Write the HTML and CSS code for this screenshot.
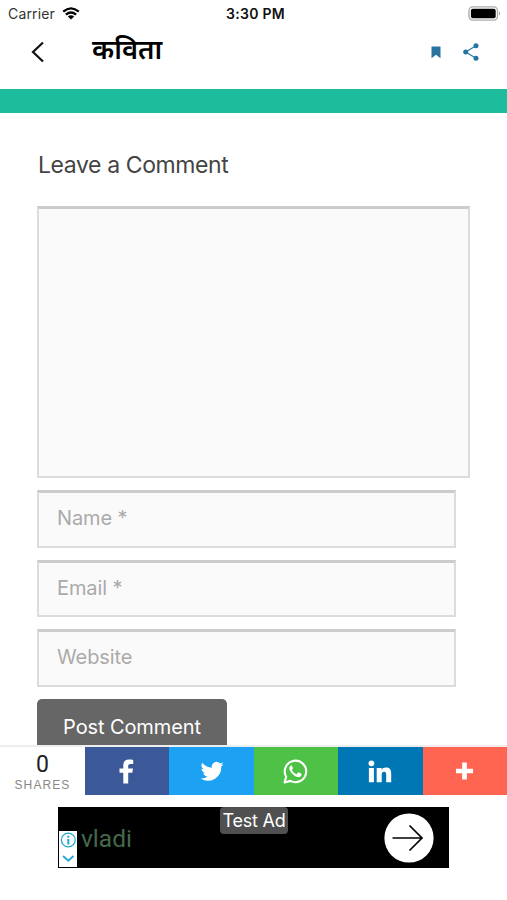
FILE: index.html
```html
<!DOCTYPE html>
<html lang="hi">

<head>
    <meta charset="utf-8">
    <title>कविता</title>
    <meta name="viewport" content="width=device-width, initial-scale=1">

    <link rel="stylesheet" href="styles.css">
</head>

<body>
    <div class="status-bar">
        <div class="carrier">
            <span>Carrier</span>
            <svg width="18" height="13" viewBox="0 0 18 13">
                <path d="M1.2 4.6Q9-1.8 16.8 4.6M3.9 7.6Q9 3.4 14.1 7.6" fill="none" stroke="#000" stroke-width="2.3" />
                <path d="M5.8 9.4Q9 6.9 12.2 9.4L9 12.6Z" />
            </svg>
        </div>
        <div class="clock">3:30 PM</div>
        <svg class="battery" width="33" height="15" viewBox="0 0 33 15">
            <rect x="1" y=".9" width="28.5" height="13.2" rx="3.8" fill="#fff" stroke="#aaa" stroke-width="1.3" />
            <rect x="2.9" y="2.8" width="24.8" height="9.4" rx="2" />
            <path d="M31 5.5Q33 7.5 31 9.5Z" fill="#999" />
        </svg>
    </div>

    <header class="header">
        <svg class="back" width="14" height="22" viewBox="0 0 14 22">
            <path d="M12 1.5 2 11l10 9.5" fill="none" stroke="#111" stroke-width="2.2" />
        </svg>
        <h1 class="title">कविता</h1>
        <svg class="bookmark" width="10" height="13" viewBox="0 0 10 13">
            <path d="M.5.5h9v11.8L5 8.7.5 12.3Z" fill="#2874a0" />
        </svg>
        <svg class="share-icon" width="16" height="18" viewBox="0 0 16 18">
            <path d="M13 2.7 2.7 9 13 15.3" fill="none" stroke="#2f7da6" stroke-width="1.3" />
            <g fill="#2474a0">
                <circle cx="13" cy="2.7" r="2.5" />
                <circle cx="2.7" cy="9" r="2.5" />
                <circle cx="13" cy="15.3" r="2.5" />
            </g>
        </svg>
    </header>

    <div class="band"></div>

    <main class="content">
        <h2 class="reply-title">Leave a Comment</h2>
        <form class="comment-form">
            <textarea class="field comment"></textarea>
            <input class="field" type="text" placeholder="Name *">
            <input class="field" type="email" placeholder="Email *">
            <input class="field" type="url" placeholder="Website">
            <button class="submit" type="button">Post Comment</button>
        </form>
    </main>

    <div class="share-bar">
        <div class="count">
            <span class="number">0</span>
            <span class="label">SHARES</span>
        </div>
        <a class="share facebook">
            <svg width="16" height="25" viewBox="0 0 16 25">
                <path d="M4.3 24.5V13.8H.5V9.4h3.800V6.200C4.300 2.500 6.500.6 9.900.6c1.600 0 3 .1 4.300.3v4h-2.600c-2 0-2.400.9-2.400 2.300v2.200H14l-.7 4.400H9.200v10.700Z" fill="#fff" />
            </svg>
        </a>
        <a class="share twitter">
            <svg width="24" height="24" viewBox="-1 0 25 24">
                <path d="M23.6 4.9c-.9.4-1.8.6-2.8.8 1-.6 1.8-1.6 2.1-2.7-.9.6-2 1-3.1 1.2a4.900 4.900 0 0 0-8.400 4.500C7.400 8.500 3.700 6.500 1.300 3.500A4.900 4.900 0 0 0 2.800 10c-.8 0-1.600-.2-2.200-.6 0 2.400 1.700 4.400 3.900 4.900-.7.2-1.500.2-2.200.1.600 2 2.400 3.400 4.600 3.400A9.900 9.900 0 0 1-.400 19.800a13.900 13.900 0 0 0 21.500-12.400c1-.7 1.800-1.500 2.500-2.500Z" fill="#fff" />
            </svg>
        </a>
        <a class="share whatsapp">
            <svg width="25" height="25" viewBox="0 0 24 24">
                <path d="M1.500 22.500 3 17A10.300 10.300 0 1 1 7.100 21Z" fill="none" stroke="#fff" stroke-width="2" stroke-linejoin="round" />
                <path d="M8.600 6.600c-.3-.6-1-.6-1.500-.1C6 7.600 5.700 9 6.400 10.500c1.600 3.300 4 5.600 7.300 6.700 1.700.5 3.300-.2 3.900-1.700.3-.9.200-1.200-.3-1.500l-2.200-1c-.4-.2-.7-.1-1 .3l-.8 1c-.3.300-.600.300-.9.100-1.700-.8-2.800-1.900-3.700-3.400-.2-.3-.1-.6.100-.9.400-.4.900-1 .8-1.500Z" fill="#fff" />
            </svg>
        </a>
        <a class="share linkedin">
            <svg width="24" height="23" viewBox="0 0 24 23">
                <path d="M.9 7.900h5V22.300H.9ZM8.700 7.900h4.900v1.900c.8-1.400 2.300-2.300 4.400-2.300 4.300 0 5.200 2.700 5.200 6.500v8.300h-5v-7.100c0-1.700-.1-3.400-2-3.400-2.100 0-2.500 1.600-2.500 3.300v7.200h-5Z" fill="#fff" />
                <circle cx="3.400" cy="3.300" r="2.900" fill="#fff" />
            </svg>
        </a>
        <a class="share more">
            <svg width="18" height="18" viewBox="0 0 18 18">
                <path d="M8.500.5v17M0 9h17" stroke="#fff" stroke-width="4.700" />
            </svg>
        </a>
    </div>

    <footer class="footer">
        <div class="ad">
            <div class="ad-choices">
                <svg width="18" height="36" viewBox="0 0 18 36" fill="none" stroke="#23a9d0">
                    <circle cx="9.300" cy="9" r="6.900" stroke-width="1.300" />
                    <path d="M9.300 4.700v2M9.300 8v5.400" stroke-width="2" />
                    <path d="m4.100 25 5.200 4.700 5.200-4.700" stroke-width="1.800" />
                </svg>
            </div>
            <span class="ad-name">vladi</span>
            <svg class="ad-arrow" width="50" height="50" viewBox="0 0 50 50">
                <circle cx="25" cy="25" r="24.600" fill="#fff" />
                <path d="M8.500 25h29M25.500 12.500 38 25 25.500 37.500" fill="none" stroke="#000" stroke-width="1.700" />
            </svg>
            <span class="ad-label">Test Ad</span>
        </div>
    </footer>
</body>

</html>
```
FILE: styles.css
```css
* {
    box-sizing: border-box;
}

body {
    display: flex;
    flex-direction: column;
    height: 100vh;
    margin: 0;
    overflow: hidden;
    background-color: #fff;
    font-family: Inter, "Liberation Sans", sans-serif;
}

svg {
    display: block;
    flex: none;
}

.status-bar {
    display: grid;
    grid-template-columns: 1fr auto 1fr;
    align-items: center;
    height: 27px;
    padding: 0 6px 0 8px;
    font-size: 14px;
}

.carrier {
    display: flex;
    align-items: center;
    gap: 7px;
    color: #333;
    letter-spacing: 0.15px;
}

.clock {
    padding-left: 2px;
    font-weight: 600;
    color: #111;
    letter-spacing: 0.3px;
}

.battery {
    justify-self: end;
}

.header {
    display: flex;
    align-items: center;
    height: 62px;
    padding: 0 28px 12px 31px;
}

.title {
    flex: 1;
    margin: 0 0 0 47px;
    font-family: "Noto Sans Devanagari", "Noto Sans", sans-serif;
    font-size: 27.5px;
    font-weight: 600;
    line-height: 50px;
    color: #000;
}

.share-icon {
    margin-left: 22px;
}

.band {
    flex: none;
    height: 24px;
    border-bottom: 0;
    background-color: #1cbc9c;
}

.content {
    flex: 1;
    min-height: 0;
    padding: 38px 37px 0;
    overflow: hidden;
}

.reply-title {
    margin: 0 0 26px;
    padding-left: 1px;
    font-size: 23px;
    font-weight: 400;
    line-height: 29px;
    letter-spacing: -0.4px;
    color: #444;
}

.comment-form {
    display: flex;
    flex-direction: column;
    align-items: flex-start;
    gap: 12px;
}

.field {
    width: 419px;
    height: 57.5px;
    margin: 0;
    padding: 0 18px 2px;
    border: 2px solid #dcdcdc;
    border-top: 3px solid #ccc;
    border-radius: 0;
    background-color: #fafafa;
    font: 20px Inter, "Liberation Sans", sans-serif;
    letter-spacing: -0.1px;
}

.field::placeholder {
    color: #aaa;
}

.comment {
    width: 433px;
    height: 272px;
    resize: none;
}

.submit {
    width: 190px;
    height: 57px;
    padding: 0;
    border: 0;
    border-radius: 5px;
    background-color: #666;
    font: 20px Inter, "Liberation Sans", sans-serif;
    letter-spacing: -0.1px;
    color: #fff;
}

.share-bar {
    display: grid;
    grid-template-columns: 85px repeat(5, 1fr);
    flex: none;
    height: 50px;
    border-top: 2px solid #eee;
    background-color: #fff;
}

.count {
    display: flex;
    flex-direction: column;
    align-items: center;
}

.number {
    margin-top: 4px;
    font-family: Roboto, sans-serif;
    font-size: 23px;
    line-height: 28px;
    color: #222;
}

.label {
    font-family: "Liberation Sans", Arial, sans-serif;
    font-size: 12px;
    line-height: 12px;
    letter-spacing: 1.1px;
    color: #888;
}

.share {
    display: flex;
    align-items: center;
    justify-content: center;
}

.facebook {
    background-color: #3b5998;
}

.twitter {
    background-color: #1da1f2;
}

.whatsapp {
    background-color: #4dc247;
}

.linkedin {
    background-color: #0077b5;
}

.more {
    background-color: #ff6550;
}

.footer {
    flex: none;
    height: 105px;
    padding: 12px 58px;
}

.ad {
    position: relative;
    display: flex;
    align-items: center;
    width: 391px;
    height: 61px;
    padding: 0 15px 0 1px;
    background-color: #000;
}

.ad-choices {
    align-self: flex-end;
    margin-bottom: 1px;
    background-color: #fff;
}

.ad-name {
    flex: 1;
    margin-left: 4px;
    padding-top: 1px;
    font-family: Roboto, sans-serif;
    font-size: 24.5px;
    color: #44694b;
}

.ad-label {
    position: absolute;
    top: 0;
    left: 162px;
    width: 68px;
    height: 27px;
    border-radius: 4px;
    background-color: #505050;
    font-size: 18px;
    line-height: 27px;
    text-align: center;
    letter-spacing: -0.2px;
    color: #fff;
}
```
